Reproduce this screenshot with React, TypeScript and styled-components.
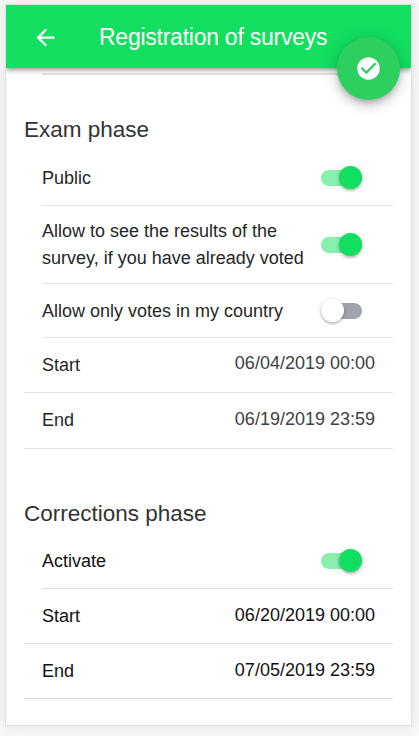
import React from 'react';
import styled, { createGlobalStyle } from 'styled-components';

const GlobalStyle = createGlobalStyle`
  * { box-sizing: border-box; }
  body {
    margin: 0;
    background: #f7f7f7;
    font-family: "Liberation Sans", Arial, sans-serif;
    overflow: hidden;
  }
`;

const Page = styled.div`
  height: 736px;
  padding: 4px 7px 10px 5px;
  overflow: hidden;
`;

const Card = styled.div`
  position: relative;
  display: flex;
  flex-direction: column;
  height: 722px;
  background: #fff;
  border: 1px solid #dedede;
  box-shadow: 0 0 14px rgba(0, 0, 0, 0.08);
`;

const Header = styled.header`
  display: flex;
  align-items: center;
  flex: none;
  height: 63px;
  padding-left: 25.5px;
  background: #12df60;
  color: #fff;
  box-shadow: 0 2px 4px -1px rgba(0, 0, 0, 0.28), 0 3px 5px rgba(0, 0, 0, 0.2);
  clip-path: inset(0 0 -12px 0);
  z-index: 1;
`;

const BackIcon = styled.svg`
  width: 27px;
  height: 27px;
  flex: none;
  margin-top: 2px;
`;

const Title = styled.h1`
  margin: 0 0 0 40.5px;
  font-size: 23px;
  letter-spacing: -0.25px;
  line-height: 30px;
  font-weight: 400;
  white-space: nowrap;
`;

const SaveButton = styled.button`
  position: absolute;
  z-index: 2;
  top: 32px;
  right: 11px;
  display: flex;
  align-items: center;
  justify-content: center;
  width: 63px;
  height: 63px;
  padding: 0;
  border: 0;
  border-radius: 50%;
  background: #2dd05e;
  box-shadow: 0 3px 5px -1px rgba(0, 0, 0, 0.2), 0 6px 11px rgba(0, 0, 0, 0.14),
    0 1px 20px rgba(0, 0, 0, 0.12);
  clip-path: inset(-30px -11px -30px -30px);
`;

const Content = styled.main`
  padding: 0 18px;
`;

const PreviousRow = styled.div`
  height: 7px;
  margin-left: 18px;
  border-bottom: 2px solid #e3e3e3;
`;

const Section = styled.section<{ $gap: number }>`
  padding-top: ${(p) => p.$gap}px;
`;

const SectionTitle = styled.h2`
  margin: 0;
  height: 35px;
  line-height: 26px;
  font-size: 22.5px;
  font-weight: 400;
  color: #333;
`;

const Row = styled.div<{ $height: number; $inset?: boolean; $soft?: boolean }>`
  display: flex;
  align-items: center;
  justify-content: space-between;
  height: ${(p) => p.$height}px;
  margin-left: ${(p) => (p.$inset ? 18 : 0)}px;
  padding: 0 18px 0 ${(p) => (p.$inset ? 0 : 18)}px;
  border-bottom: 1px solid ${(p) => (p.$soft ? '#e3e3e3' : '#dedede')};
  color: ${(p) => (p.$soft ? '#262626' : '#111')};
  font-size: 18px;
`;

const Label = styled.span<{ $drop?: number; $lift?: number }>`
  padding-top: ${(p) => p.$drop ?? 0}px;
  padding-bottom: ${(p) => p.$lift ?? 0}px;
  line-height: 27px;
  white-space: pre-line;
`;

const DateValue = styled.span<{ $soft?: boolean; $lift?: number }>`
  line-height: 22px;
  margin-bottom: ${(p) => p.$lift ?? 2}px;
  color: ${(p) => (p.$soft ? '#404040' : '#111')};
`;

const Track = styled.span<{ $on: boolean; $lift: number }>`
  display: flex;
  align-items: center;
  justify-content: ${(p) => (p.$on ? 'flex-end' : 'flex-start')};
  width: 41px;
  height: 16px;
  margin: 0 13px ${(p) => p.$lift}px 0;
  border-radius: 8px;
  background: ${(p) => (p.$on ? '#88efaf' : '#a0a3ac')};
`;

const Knob = styled.span<{ $on: boolean }>`
  width: 23px;
  height: 23px;
  flex: none;
  border-radius: 50%;
  background: ${(p) => (p.$on ? '#12df60' : '#fff')};
  box-shadow: 0 2px 2px rgba(0, 0, 0, 0.14), 0 1px 4px rgba(0, 0, 0, 0.2);
`;

const Toggle = ({ on = false, lift = 0 }: { on?: boolean; lift?: number }) => (
  <Track role="switch" aria-checked={on} $on={on} $lift={lift}>
    <Knob $on={on} />
  </Track>
);

export default function App() {
  return (
    <>
      <GlobalStyle />
      <Page>
        <Card>
          <Header>
            <BackIcon viewBox="0 0 24 24" fill="currentColor">
              <path d="M20 11H7.83l5.59-5.59L12 4l-8 8 8 8 1.41-1.41L7.83 13H20v-2z" />
            </BackIcon>
            <Title>Registration of surveys</Title>
          </Header>
          <SaveButton aria-label="Save">
            <svg width="27" height="27" viewBox="0 0 24 24" fill="#fff">
              <path d="M12 2C6.48 2 2 6.48 2 12s4.48 10 10 10 10-4.48 10-10S17.52 2 12 2zm-2 15l-5-5 1.41-1.41L10 14.17l7.59-7.59L19 8l-9 9z" />
            </svg>
          </SaveButton>
          <Content>
            <PreviousRow />
            <Section $gap={42}>
              <SectionTitle>Exam phase</SectionTitle>
              <Row $height={54} $inset $soft>
                <Label>Public</Label>
                <Toggle on lift={2} />
              </Row>
              <Row $height={78} $inset $soft>
                <Label $drop={1}>{'Allow to see the results of the\nsurvey, if you have already voted'}</Label>
                <Toggle on />
              </Row>
              <Row $height={54} $inset $soft>
                <Label $drop={2}>Allow only votes in my country</Label>
                <Toggle />
              </Row>
              <Row $height={55} $soft>
                <Label $drop={1}>Start</Label>
                <DateValue $soft $lift={4}>06/04/2019 00:00</DateValue>
              </Row>
              <Row $height={56} $soft>
                <Label>End</Label>
                <DateValue $soft $lift={3}>06/19/2019 23:59</DateValue>
              </Row>
            </Section>
            <Section $gap={52}>
              <SectionTitle>Corrections phase</SectionTitle>
              <Row $height={53} $inset>
                <Label $lift={2}>Activate</Label>
                <Toggle on lift={3} />
              </Row>
              <Row $height={55}>
                <Label>Start</Label>
                <DateValue>06/20/2019 00:00</DateValue>
              </Row>
              <Row $height={55}>
                <Label>End</Label>
                <DateValue>07/05/2019 23:59</DateValue>
              </Row>
            </Section>
          </Content>
        </Card>
      </Page>
    </>
  );
}
